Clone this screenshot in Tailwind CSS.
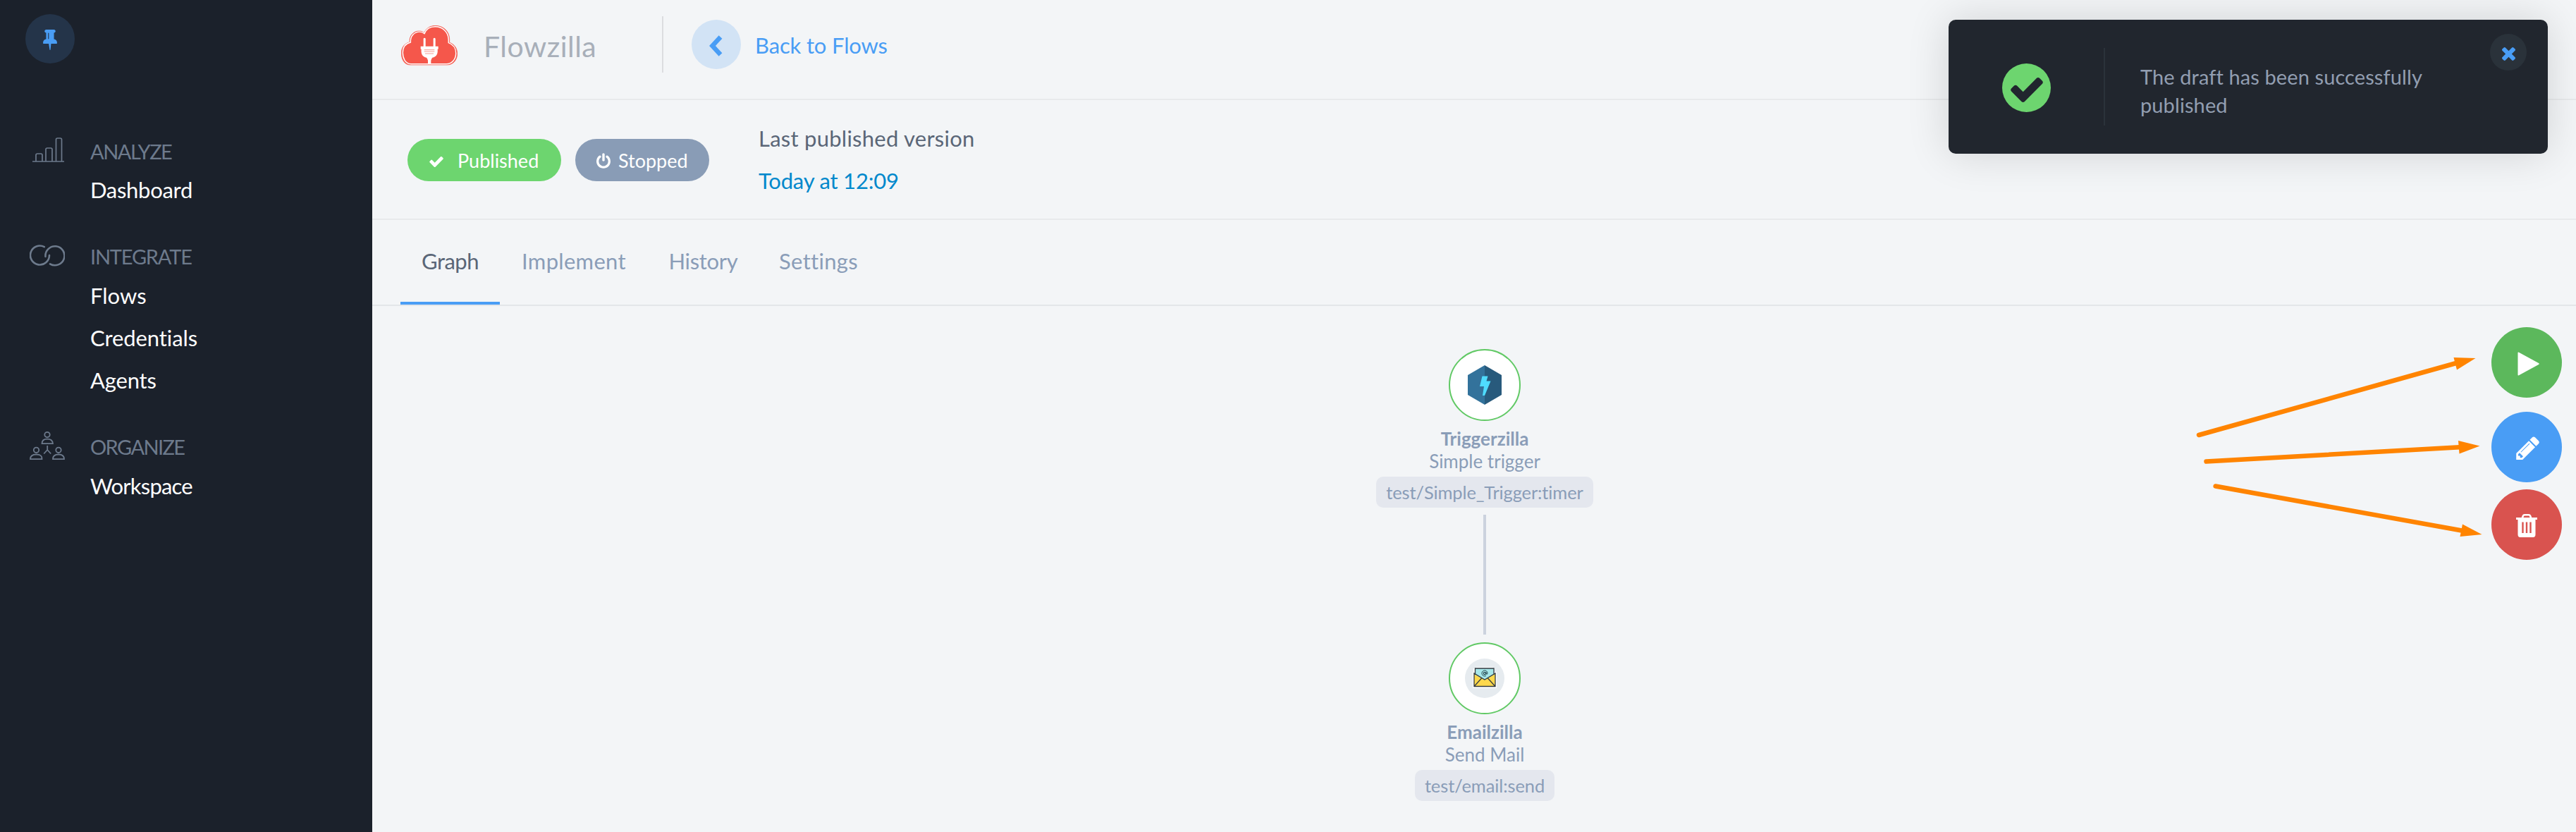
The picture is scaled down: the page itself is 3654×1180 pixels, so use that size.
<!DOCTYPE html>
<html lang="en">
<head>
<meta charset="utf-8">
<title>Flowzilla</title>
<script src="https://cdn.jsdelivr.net/npm/@tailwindcss/browser@4"></script>
</head>
<body class="relative flex h-[1180px] w-[3654px] overflow-hidden bg-[#f3f5f7] font-['Lato','Noto_Sans',sans-serif] text-[31px] whitespace-nowrap [font-variant-ligatures:none]">

<!-- Sidebar -->
<aside class="h-full w-[528px] shrink-0 bg-[#1b212b] pt-5 text-white">
  <button class="ml-9 flex size-[70px] items-center justify-center rounded-full bg-[#243449]">
    <svg class="mt-[3px] h-[29px] w-5" viewBox="320 128 1152 1664" fill="#499df5"><path d="M800 864v-448q0-14-9-23t-23-9-23 9-9 23v448q0 14 9 23t23 9 23-9 9-23zm672 352q0 26-19 45t-45 19h-429l-51 483q-2 12-10.5 20.5t-20.5 8.5h-1q-27 0-32-27l-76-485h-404q-26 0-45-19t-19-45q0-123 78.5-221.5t177.5-98.5v-512q-52 0-90-38t-38-90 38-90 90-38h640q52 0 90 38t38 90-38 90-90 38v512q99 0 177.5 98.5t78.5 221.5z"/></svg>
  </button>
  <nav class="mt-[99px] flex flex-col gap-10">
    <section>
      <h2 class="flex h-[50px] items-center gap-9 pl-[42px] text-[29px] leading-[50px] text-[#6d7a8c]">
        <svg class="size-[50px]" viewBox="0 0 50 50" fill="none" stroke="#6d7a8c" stroke-width="1.7"><path d="M4 40h45"/><path d="M9 40v-9q0-2 2-2h5q2 0 2 2v9M23 40v-17q0-2 2-2h5q2 0 2 2v17M37.500 40v-31q0-2 2-2h4q2 0 2 2v31"/></svg>
        <span class="pt-0.5 tracking-[-1.5px]">ANALYZE</span>
      </h2>
      <ul class="pl-32 leading-[60px]"><li class="h-[60px] tracking-[-0.3px]">Dashboard</li></ul>
    </section>
    <section>
      <h2 class="flex h-[50px] items-center gap-9 pl-[42px] text-[29px] leading-[50px] text-[#6d7a8c]">
        <svg class="size-[50px]" viewBox="0 0 50 50" fill="none" stroke="#6d7a8c" stroke-width="2.6" stroke-linecap="round"><path d="M20.800 11.100A13.500 13.500 0 1 0 28 23"/><path d="M22.500 25A13.500 13.500 0 1 1 29 35.300"/></svg>
        <span class="tracking-[-1.2px]">INTEGRATE</span>
      </h2>
      <ul class="pl-32 leading-[60px]">
        <li class="h-[60px]">Flows</li>
        <li class="h-[60px] tracking-[-0.1px]">Credentials</li>
        <li class="h-[60px] tracking-[-0.2px]">Agents</li>
      </ul>
    </section>
    <section>
      <h2 class="flex h-[50px] items-center gap-9 pl-[42px] text-[29px] leading-[50px] text-[#6d7a8c]">
        <svg class="size-[50px]" viewBox="0 0 50 50" fill="none" stroke="#6d7a8c" stroke-width="1.8"><circle cx="25" cy="7.500" r="3.700"/><path d="M17.500 20.200q0-6.500 7.500-6.500t8 6.500z"/><circle cx="9.500" cy="29.300" r="3.700"/><path d="M1 42.200q0-6.700 8.500-6.700t8 6.700z"/><circle cx="41" cy="29.300" r="3.700"/><path d="M33 42.200q0-6.700 8-6.700t8 6.700zM25.200 23v6l-5 5.500M25.200 29l5 5.500"/></svg>
        <span class="tracking-[-1.6px]">ORGANIZE</span>
      </h2>
      <ul class="pl-32 leading-[60px]"><li class="h-[60px] tracking-[-0.8px]">Workspace</li></ul>
    </section>
  </nav>
</aside>

<main class="flex min-w-0 flex-1 flex-col">
  <!-- Top bar -->
  <header class="flex h-[142px] items-center border-b-2 border-[#e8eaec] pb-3 pl-[41px]">
    <svg class="h-[57px] w-20" viewBox="0 0 240 171">
      <path d="M38 168C12 168 1 142 1 118C1 92 16 76 36 71C34 42 54 24 76 24C86 24 92 27 98 32C106 12 124 1 146 1C180 1 205 26 206 58L206 73C226 80 239 98 239 120C239 146 222 168 196 168Z" fill="#f5574b" stroke="#f5574b" stroke-width="2"/>
      <path transform="translate(6 4.500) scale(.95)" d="M38 168C12 168 1 142 1 118C1 92 16 76 36 71C34 42 54 24 76 24C86 24 92 27 98 32C106 12 124 1 146 1C180 1 205 26 206 58L206 73C226 80 239 98 239 120C239 146 222 168 196 168Z" fill="none" stroke="#fff" stroke-width="4.500"/>
      <path d="M95 56q4-5 9 0v33h33V56q4-5 9 0v33h12v12h-3c2 20-4 32-22 36q-4 4-6 12v15h-13v-15q-2-8-6-12c-18-4-24-16-22-36h-3V89h12z" fill="#fff"/>
      <path d="M98 104h44M98 111h44M102 120h36" stroke="#f79a92" stroke-width="3"/>
    </svg>
    <span class="ml-[37px] w-[253px] pt-[3px] text-[41px] leading-[50px] tracking-[0.5px] text-[#a8afb9]">Flowzilla</span>
    <span class="-mt-0.5 h-20 w-0.5 bg-[#dcdde0]"></span>
    <a class="ml-10 flex items-center text-[#499df5]">
      <span class="-mt-0.5 flex size-[70px] items-center justify-center rounded-full bg-[#d2e3f5]">
        <svg class="mt-1 -ml-[3px] h-[30px] w-5" viewBox="0 0 20 30" fill="none" stroke="#499df5" stroke-width="6.500" stroke-linejoin="miter"><path d="M17 2.500L5.500 15L17 27.500"/></svg>
      </span>
      <span class="ml-5 tracking-[-0.15px]">Back to Flows</span>
    </a>
  </header>

  <!-- Version status -->
  <section class="flex h-[170px] items-center border-b-2 border-[#e8eaec] pl-[50px]">
    <span class="mt-0.5 flex h-[60px] w-[218px] items-center rounded-full bg-[#6dd56f] pl-[31px] text-[27px] text-white">
      <svg class="mt-1 h-[15px] w-5" viewBox="121 334 1550 1188" fill="#fff"><path d="M1671 566q0 40-28 68l-724 724-136 136q-28 28-68 28t-68-28l-136-136-362-362q-28-28-28-68t28-68l136-136q28-28 68-28t68 28l294 295 656-657q28-28 68-28t68 28l136 136q28 28 28 68z"/></svg>
      <span class="ml-5 pt-[3px]">Published</span>
    </span>
    <span class="mt-0.5 ml-5 flex h-[60px] w-[190px] items-center rounded-full bg-[#899cb6] pl-[30px] text-[27px] text-white">
      <svg class="mt-0.5 h-[22px] w-5" viewBox="128 0 1536 1664" fill="#fff"><path d="M1664 896q0 156-61 298t-164 245-245 164-298 61-298-61-245-164-164-245-61-298q0-182 80.500-343t226.500-270q43-32 95.500-25t83.500 50q32 42 24.500 94.500t-49.500 84.500q-98 74-151.500 181t-53.500 228q0 104 40.500 198.500t109.500 163.500 163.500 109.500 198.500 40.500 198.500-40.500 163.500-109.500 109.500-163.500 40.500-198.500q0-121-53.500-228t-151.500-181q-42-32-49.500-84.500t24.500-94.500q31-43 84-50t95 25q146 109 226.500 270t80.500 343zm-640-768v640q0 52-38 90t-90 38-90-38-38-90v-640q0-52 38-90t90-38 90 38 38 90z"/></svg>
      <span class="ml-[11px] pt-[3px]">Stopped</span>
    </span>
    <div class="ml-[70px] leading-[60px]">
      <p class="tracking-[0.25px] text-[#5a6677]">Last published version</p>
      <p class="tracking-[-0.2px] text-[#0088cc]">Today at 12:09</p>
    </div>
  </section>

  <!-- Tabs -->
  <nav class="flex h-[122px] border-b-2 border-[#e3e6e9] pl-10 text-center leading-[116px] text-[#8a9db8]">
    <a class="w-[141px] border-b-4 border-[#499df5] tracking-[-0.5px] text-[#5a6677]">Graph</a>
    <a class="w-[210px] tracking-[0.3px]">Implement</a>
    <a class="w-[157px] tracking-[-0.3px]">History</a>
    <a class="w-[170px] tracking-[0.3px]">Settings</a>
  </nav>

  <!-- Flow canvas -->
  <section class="relative flex-1 text-[26px] leading-8 text-[#8a9db8]">
    <div class="absolute top-[61px] left-[1378px] flex w-[400px] flex-col items-center">
      <div class="flex size-[102px] items-center justify-center rounded-full border-2 border-[#61c965] bg-white">
        <svg class="h-14 w-12" viewBox="0 0 48 56"><path d="M24 0L0 14v28l24 14z" fill="#33729b"/><path d="M24 0l24 14v28L24 56z" fill="#285a7c"/><path d="M20.500 15.500h8l-2 7h6L24 43h-3l2-13h-6z" fill="#4fdcff"/></svg>
      </div>
      <b class="mt-[9px] font-bold">Triggerzilla</b>
      <span>Simple trigger</span>
      <span class="mt-1.5 h-11 w-[308px] rounded-[10px] bg-[#e4e7ee] text-center text-[25.5px] leading-[44px] tracking-[-0.13px]">test/Simple_Trigger:timer</span>
      <i class="mt-2.5 h-[170px] w-1 bg-[#cbd2de]"></i>
      <div class="mt-[11px] flex size-[102px] items-center justify-center rounded-full border-2 border-[#61c965] bg-white">
        <div class="flex size-14 items-center justify-center rounded-full bg-[#e6ebef]">
          <svg class="h-8 w-9" viewBox="0 0 36 32"><path d="M2 2h4V0.500h24V2v5h5v23H1V7h1z" fill="#fff"/><path d="M3 9l15 9 15-9v18.500H3z" fill="#fdd84c"/><path d="M4.500 2h26.500v9L18 18 4.500 11z" fill="#a7e7ea"/><path d="M4.500 11V2H31v9M3 9v18.500h30V9L18 18zM3 27.500L13.500 16M33 27.500L22.500 16" fill="none" stroke="#333a40" stroke-width="1.300"/><circle cx="18" cy="9" r="1.600" fill="none" stroke="#24444c" stroke-width="1.200"/><path d="M20 7v2.800q2 1.200 2-1a4 4 0 1 0-2 3.600" fill="none" stroke="#24444c" stroke-width="1"/></svg>
        </div>
      </div>
      <b class="mt-[9px] font-bold">Emailzilla</b>
      <span>Send Mail</span>
      <span class="mt-1.5 h-11 w-[198px] rounded-[10px] bg-[#e4e7ee] text-center text-[25.5px] leading-[44px] tracking-[-0.1px]">test/email:send</span>
    </div>

    <!-- Pointers to the action buttons -->
    <svg class="absolute top-[56px] left-[2582px] h-[290px] w-[420px]" viewBox="3110 490 420 290" fill="#ff8400" stroke="#ff8400">
      <g stroke-width="6.500" stroke-linecap="round"><path d="M3119 617L3484 515"/><path d="M3129.500 654.500L3489 634.300"/><path d="M3142.600 689.500L3492 752.500"/></g>
      <g stroke="none"><path d="M3511.500 508l-31-1 4.500 17.500z"/><path d="M3517.500 632.500l-30.500-7.500 1.500 18.500z"/><path d="M3520.500 758l-27.500-14.500-3.500 17.500z"/></g>
    </svg>

    <div class="absolute top-[30px] right-5 flex flex-col">
      <button class="flex size-[100px] items-center justify-center rounded-full bg-[#5cb85c]"><svg class="mt-[3px] ml-1 h-[34px] w-[31px]" viewBox="0 0 31 34" fill="#fff"><path d="M.5 1.500Q.5 0 2 .8L30 16q1.500 1 0 2L2 33.200Q.5 34 .5 32.500z"/></svg></button>
      <button class="mt-5 flex size-[100px] items-center justify-center rounded-full bg-[#499df5]"><svg class="mt-0.5 ml-0.5 size-[33px]" viewBox="0 0 1515 1536" fill="#fff"><path d="M363 1408l91-91-235-235-91 91v107h128v128h107zM886 480q0-22-22-22-10 0-17 7L305 1007q-7 7-7 17 0 22 22 22 10 0 17-7l542-542q7-7 7-17zM832 288l416 416-832 832H0v-416zM1515 384q0 53-37 90l-166 166-416-416 166-165q36-38 90-38 53 0 91 38l235 234q37 39 37 91z"/></svg></button>
      <button class="mt-2.5 flex size-[100px] items-center justify-center rounded-full bg-[#d9534f]"><svg class="mt-[3px] h-[33px] w-[30px]" viewBox="0 0 30 33"><path d="M0 5h30v3h-2.500v21q0 4-3.500 4H6q-3.500 0-3.500-4V8H0z" fill="#fff"/><path d="M8.500 6.500L10 2.500q.5-1.200 2-1.200h6q1.500 0 2 1.200l1.500 4" fill="none" stroke="#fff" stroke-width="2.600"/><path d="M9.500 11.500v15.500M15 11.500v15.500M20.500 11.500v15.500" stroke="#d9534f" stroke-width="2.400"/></svg></button>
    </div>
  </section>
</main>

<!-- Notification -->
<div class="absolute top-7 right-10 flex h-[190px] w-[850px] rounded-[10px] bg-[#21262e] shadow-[0_0_60px_rgba(0,0,0,0.14)]">
  <div class="mt-[62px] ml-[76px] flex size-[69px] items-center justify-center rounded-full bg-[#6dd56f]">
    <svg class="mt-[5px] h-[35px] w-[46px]" viewBox="121 334 1550 1188" fill="#21262e"><path d="M1671 566q0 40-28 68l-724 724-136 136q-28 28-68 28t-68-28l-136-136-362-362q-28-28-28-68t28-68l136-136q28-28 68-28t68 28l294 295 656-657q28-28 68-28t68 28l136 136q28 28 28 68z"/></svg>
  </div>
  <span class="mt-10 ml-[75px] h-[110px] w-0.5 bg-[#2b323a]"></span>
  <p class="mt-[61px] ml-[50px] w-[420px] text-[29px] leading-10 tracking-[0.1px] text-[#929eb1]">The draft has been successfully<br>published</p>
  <button class="mt-5 ml-[76px] flex size-[52px] items-center justify-center rounded-full bg-[#2a323a]">
    <svg class="mt-1 size-[19px]" viewBox="302 366 1188 1188" fill="#499df5"><path d="M1490 1322q0 40-28 68l-136 136q-28 28-68 28t-68-28l-294-294-294 294q-28 28-68 28t-68-28l-136-136q-28-28-28-68t28-68l294-294-294-294q-28-28-28-68t28-68l136-136q28-28 68-28t68 28l294 294 294-294q28-28 68-28t68 28l136 136q28 28 28 68t-28 68l-294 294 294 294q28 28 28 68z"/></svg>
  </button>
</div>
</body>
</html>
